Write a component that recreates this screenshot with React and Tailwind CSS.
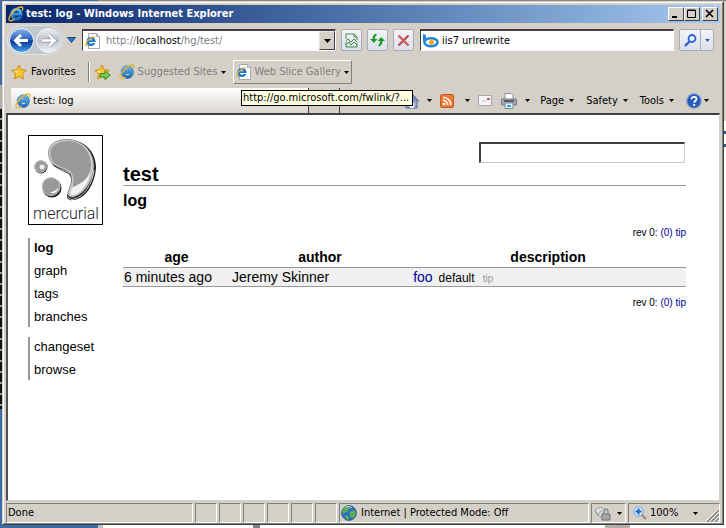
import React from "react";

const UI = "font-['DejaVu_Sans_Condensed','DejaVu_Sans',sans-serif]";

function IeIcon({ size = 16 }) {
  return (
    <svg width={size} height={size} viewBox="0 0 16 16" className="shrink-0" aria-hidden="true">
      <defs>
        <linearGradient id="ieBlue" x1="0" y1="0" x2="0" y2="1">
          <stop offset="0" stopColor="#6cc6f5" />
          <stop offset="1" stopColor="#1565b8" />
        </linearGradient>
      </defs>
      <path
        d="M8.400 1.800a6.200 6.200 0 0 0-6.200 6.300 6.200 6.200 0 0 0 6.200 6.300c2.700 0 4.800-1.500 5.700-3.900h-3.700c-.5.700-1.100 1-2 1-1.300 0-2.300-.8-2.400-2.100h8.400C14.800 4.900 12.100 1.800 8.400 1.800zM6 6.700c.2-1.100 1.100-1.800 2.300-1.800s2.100.7 2.300 1.800z"
        fill="url(#ieBlue)"
        stroke="#1b62a8"
        strokeWidth=".6"
      />
      <path
        d="M14.300 4.300c.9-2 .6-3.300-1-3.300-2 0-5.500 2-8.300 5C2 9.300.3 12.900 1.300 14.400c.8 1 2.700.4 4.700-1"
        fill="none"
        stroke="#e9b52c"
        strokeWidth="1.300"
        strokeLinecap="round"
      />
    </svg>
  );
}

function PageIcon() {
  return (
    <svg width="16" height="16" viewBox="0 0 16 16" className="shrink-0" aria-hidden="true">
      <path d="M3.500.5h8l3 3v12h-11z" fill="#fff" stroke="#a3a9b5" />
      <path d="M11.500.5v3h3" fill="none" stroke="#a3a9b5" />
      <path d="M6 4a4.500 4.500 0 1 0 4.200 6H7.600C6.500 11 4.200 10.900 4.100 9.100h6.500C10.700 6.200 8.800 4 6 4zM4.200 7.300c.3-1.500 3-1.500 3.300 0z" fill="#1d78c8" />
      <path d="M10 4.300C8 3 3 6 1 10.500c-.7 2 0 2.900 1.800 2" fill="none" stroke="#e6b02a" strokeWidth="1.200" />
    </svg>
  );
}

function Caret({ color = "#000" }) {
  return (
    <svg width="5" height="3" viewBox="0 0 5 3" className="shrink-0" aria-hidden="true">
      <path d="M0 0h5L2.500 3z" fill={color} />
    </svg>
  );
}

function Star({ arrow = false }) {
  return (
    <svg width="17" height="17" viewBox="0 0 17 17" className="shrink-0" aria-hidden="true">
      <path d="M8 1l2.100 4.700 5.200.6-3.900 3.500 1.100 5.200L8 12.400 3.500 15l1.100-5.200L.7 6.300l5.200-.6z" fill="#fdc52f" stroke="#d18a14" strokeLinejoin="round" />
      <path d="M8 3.200L6.600 6.500l-3.500.5 2.700 2.200z" fill="#ffeaa0" />
      {arrow && <path d="M6 9.500h5V7l5.300 4.200L11 15.500V13H6z" fill="#79cf4a" stroke="#35851f" />}
    </svg>
  );
}

function BackForward() {
  return (
    <div className="flex h-[30px] w-[56px] shrink-0 items-center rounded-full bg-[#c3c7ce] px-[1px] shadow-[inset_0_0_1px_1px_#e6e6e6]">
      <button aria-label="Back" className="block">
        <svg width="27" height="27" viewBox="0 0 27 27">
          <defs>
            <linearGradient id="back" x1="0" y1="0" x2="0" y2="1">
              <stop offset="0" stopColor="#8eb6ec" />
              <stop offset=".45" stopColor="#2b62bd" />
              <stop offset=".55" stopColor="#0c3c9b" />
              <stop offset="1" stopColor="#44a3f0" />
            </linearGradient>
          </defs>
          <circle cx="13.500" cy="13.500" r="12" fill="url(#back)" stroke="#f2f5fa" />
          <path d="M20 13.500H8M13 8l-5.500 5.500L13 19" fill="none" stroke="#fff" strokeWidth="3" />
        </svg>
      </button>
      <button aria-label="Forward" className="block">
        <svg width="27" height="27" viewBox="0 0 27 27">
          <defs>
            <linearGradient id="fwd" x1="0" y1="0" x2="0" y2="1">
              <stop offset="0" stopColor="#eef0f2" />
              <stop offset=".5" stopColor="#b9c0c8" />
              <stop offset="1" stopColor="#f4f6f8" />
            </linearGradient>
          </defs>
          <circle cx="13.500" cy="13.500" r="12" fill="url(#fwd)" stroke="#edf0f3" />
          <path d="M7 13.500h12M14 8l5.500 5.500L14 19" fill="none" stroke="#8e98a3" strokeWidth="4" />
          <path d="M7 13.500h12M14 8l5.500 5.500L14 19" fill="none" stroke="#fff" strokeWidth="2.500" />
        </svg>
      </button>
    </div>
  );
}

function ToolButton({ label, children }) {
  return (
    <button aria-label={label} className="flex h-[22px] w-[21px] shrink-0 items-center justify-center rounded-[2px] border border-[#a9acb8] bg-gradient-to-b from-[#f4f4f6] to-[#dcdfea]">
      {children}
    </button>
  );
}

function TitleButton({ label, children }) {
  return (
    <button aria-label={label} className="flex h-[14px] w-4 items-center justify-center border border-t-white border-r-[#404040] border-b-[#404040] border-l-white bg-[#d4d0c8]">
      <svg width="10" height="10" viewBox="0 0 10 10" stroke="#000" fill="none">{children}</svg>
    </button>
  );
}

function TitleBar() {
  return (
    <header className="flex h-[18px] shrink-0 items-center gap-[2px] bg-gradient-to-r from-[#0a246a] to-[#a6caf0] pr-[2px] pl-[2px]">
      <IeIcon />
      <h1 className="grow text-[11px] leading-[18px] font-bold text-white">test: log - Windows Internet Explorer</h1>
      <div className="flex">
        <TitleButton label="Minimize"><path d="M1 8h5" strokeWidth="2" /></TitleButton>
        <TitleButton label="Maximize"><path d="M.5 1.500h8v7h-8zM.5 1h8" /></TitleButton>
      </div>
      <TitleButton label="Close"><path d="M1 1l7 7M8 1L1 8" strokeWidth="1.600" /></TitleButton>
    </header>
  );
}

function NavBar() {
  return (
    <div className="flex h-[34px] shrink-0 items-center pr-[6px] pl-[1px]">
      <BackForward />
      <button aria-label="Recent pages" className="ml-[4px] flex w-[9px] justify-center">
        <svg width="9" height="6" viewBox="0 0 9 6"><path d="M.5.500h8L4.500 5.500z" fill="#2f77c4" stroke="#174a86" /></svg>
      </button>
      <div className="ml-[6px] flex h-[22px] min-w-0 flex-1 items-center border border-t-2 border-t-[#404040] border-r-white border-b-white border-l-[#404040] bg-white pl-[2px]">
        <PageIcon />
        <p className="ml-[5px] grow text-[11px] leading-[18px] text-[#808080]">
          http://<span className="text-black">localhost</span>/hg/test/
        </p>
        <button aria-label="Show address list" className="flex h-[19px] w-4 items-center justify-center border border-t-[#e8e6e0] border-r-[#404040] border-b-[#404040] border-l-[#e8e6e0] bg-[#d4d0c8]">
          <svg width="7" height="4" viewBox="0 0 7 4"><path d="M0 0h7L3.500 4z" /></svg>
        </button>
      </div>
      <div className="ml-[5px] flex gap-[5px]">
        <ToolButton label="Compatibility view">
          <svg width="13" height="15" viewBox="0 0 13 15" fill="none" stroke="#3d9147">
            <path d="M1 6V1h8l3 3v3M9 1v3h3M1 9v5h11v-4" />
            <path d="M1 8l2-2 3 3 3-3 3 3M1 12l3-3 2 3 3-3 3 3" />
          </svg>
        </ToolButton>
        <ToolButton label="Refresh">
          <svg width="15" height="14" viewBox="0 0 15 14" fill="#219a2c">
            <path d="M0 6h2.500c0-3 1.500-5 4-5.500v2C5.400 3 5 4 5 6h2.500L3.800 10zM7.500 8L11.200 4 15 8h-2.500c0 3-1.500 5-4 5.500v-2c1.100-.5 1.500-1.500 1.500-3.500z" />
          </svg>
        </ToolButton>
        <ToolButton label="Stop">
          <svg width="13" height="13" viewBox="0 0 13 13"><path d="M1.500 1.500l10 10M11.500 1.500l-10 10" stroke="#c2474f" strokeWidth="2.200" /><path d="M2 2l9 9" stroke="#e38b8b" strokeWidth=".7" /></svg>
        </ToolButton>
      </div>
      <div className="ml-[6px] flex h-[22px] min-w-0 flex-1 items-center border border-t-2 border-t-[#404040] border-r-white border-b-white border-l-[#404040] bg-white pl-[2px]">
        <svg width="16" height="14" viewBox="0 0 16 14" className="shrink-0" aria-hidden="true">
          <path d="M0 0l3 1v6H0z" fill="#1d87d8" />
          <ellipse cx="8" cy="8.300" rx="6.600" ry="4" fill="#fff" stroke="#1d87d8" strokeWidth="2.600" />
          <circle cx="8.500" cy="8.300" r="2.500" fill="#f5a11c" />
        </svg>
        <input aria-label="Search" defaultValue="iis7 urlrewrite" className="ml-[3px] w-full min-w-0 bg-transparent text-[11px] leading-[18px] text-black outline-none" />
      </div>
      <div className="ml-[5px] flex h-[22px] w-[35px] shrink-0 rounded-[2px] border border-[#a9acb8] bg-gradient-to-b from-[#f4f4f6] to-[#dcdfea]">
        <button aria-label="Search" className="flex w-[21px] items-center justify-center border-r border-[#a9acb8]">
          <svg width="13" height="13" viewBox="0 0 13 13" fill="none" stroke="#2a63cf"><circle cx="8" cy="4.500" r="3.500" strokeWidth="1.800" fill="#e8f1ff" /><path d="M5.500 7.500L1 12" strokeWidth="2.400" /></svg>
        </button>
        <button aria-label="Search options" className="flex flex-1 items-center justify-center"><Caret color="#2a63cf" /></button>
      </div>
    </div>
  );
}

function FavoritesBar() {
  return (
    <div className="flex h-[30px] shrink-0 items-center pl-[5px] text-[11px] leading-[16px]">
      <button className="flex items-center gap-[3px]"><Star />Favorites</button>
      <div className="ml-[12px] h-5 w-[2px] border-r border-l border-r-white border-l-[#808080]" />
      <button aria-label="Add to Favorites Bar" className="ml-[4px]"><Star arrow /></button>
      <button className="ml-[8px] flex items-center gap-[3px] text-[#808080]"><IeIcon />Suggested Sites<Caret /></button>
      <button className="ml-[7px] flex h-6 items-center gap-[3px] border border-t-white border-r-[#808080] border-b-[#808080] border-l-white px-[2px] text-[#808080]">
        <PageIcon />Web Slice Gallery<Caret />
      </button>
    </div>
  );
}

function HomeIcon() {
  return (
    <svg width="16" height="16" viewBox="0 0 16 16" aria-hidden="true">
      <path d="M2 8v7h11V8" fill="#9fb2d3" stroke="#4c658f" /><path d="M0 8.500L8 1l7 7.500" fill="#7893be" stroke="#3f5988" /><path d="M6 15v-5h4v5" fill="#eef3fb" />
    </svg>
  );
}

function Command({ label, icon, text, gap = "gap-[5px]" }) {
  return (
    <button aria-label={label} className={"flex items-center " + gap}>{icon}{text}<Caret /></button>
  );
}

function TabRow() {
  return (
    <div className="flex h-[26px] shrink-0 items-end pl-[5px] text-[11px] leading-[16px]">
      <button className="flex h-[25px] w-[298px] shrink-0 items-center gap-[2px] border-r border-r-[#404040] bg-gradient-to-b from-white to-[#d9d6cf] pl-[4px]">
        <IeIcon />test: log
      </button>
      <button aria-label="New tab" className="h-[25px] w-[31px] shrink-0 border-r border-r-[#404040]" />
      <div className="relative flex h-[25px] grow items-center pr-[11px] pl-[64px]">
        <Command label="Home" icon={<HomeIcon />} gap="gap-[7px]" />
        <div className="ml-[8px]">
          <Command label="Feeds" gap="gap-[11px]" icon={
            <svg width="14" height="14" viewBox="0 0 14 14"><rect x=".5" y=".5" width="13" height="13" rx="1.500" fill="#ee7c32" stroke="#c9571b" /><circle cx="4" cy="10" r="1.300" fill="#fff" /><path d="M3 6.300a4.700 4.700 0 0 1 4.700 4.700M3 3.200A7.800 7.800 0 0 1 10.800 11" fill="none" stroke="#fff" strokeWidth="1.500" /></svg>
          } />
        </div>
        <button aria-label="Read mail" className="ml-[8px]">
          <svg width="14" height="11" viewBox="0 0 14 11"><path d="M.5.5h13v10H.5z" fill="#f7f5f5" stroke="#a9a7ac" /><path d="M9 3h3v2H9z" fill="#cf5963" /><path d="M4 6h4" stroke="#d8b9bb" /></svg>
        </button>
        <div className="ml-[9px]">
          <Command label="Print" gap="gap-[8px]" icon={
            <svg width="16" height="16" viewBox="0 0 16 16"><path d="M4 6V.5h6l2 2V6" fill="#fff" stroke="#868c97" /><path d="M.5 6h15v6H.5z" fill="#a4a9b1" stroke="#7a7f89" /><path d="M3 7h10v2H3z" fill="#565b64" /><path d="M4 10h8v5.500H4z" fill="#eef6fb" stroke="#77879b" /><path d="M6 13h4" stroke="#33a1dc" strokeWidth="2" /></svg>
          } />
        </div>
        <div className="ml-auto flex items-center gap-[12px]">
          <Command label="Page" text="Page" />
          <Command label="Safety" text="Safety" />
          <Command label="Tools" text="Tools" />
          <Command label="Help" gap="gap-[2px]" icon={
            <svg width="16" height="16" viewBox="0 0 16 16"><circle cx="8" cy="8" r="7.300" fill="#285bb8" stroke="#8ca7cf" strokeWidth="1.200" /><path d="M5.500 6.200C5.500 3 10.500 3.200 10.500 6c0 1.700-2.300 1.800-2.300 3.700M8.200 11v2" fill="none" stroke="#fff" strokeWidth="1.800" /></svg>
          } />
        </div>
        <div role="tooltip" className="absolute top-[2px] left-[-99px] h-4 w-[172px] overflow-hidden border border-black bg-[#ffffe1] px-[1px] text-[11px] leading-[14px] whitespace-nowrap">
          http://go.microsoft.com/fwlink/?...
        </div>
      </div>
    </div>
  );
}

function MercurialLogo() {
  return (
    <svg width="75" height="90" viewBox="0 0 75 90" role="img" aria-label="mercurial">
      <rect x=".5" y=".5" width="74" height="89" fill="#fff" stroke="#000" />
      <path d="M22 22C22 9 31 5 42 5c17 1 26 14 26 27-1 17-10 31-22 33-7 1-8-3-6-7 3-7 5-14 1-19-6-4-18-4-19-17z" fill="#111" />
      <path d="M20.500 18C20.500 8 30 4 41 4.500c15 1 25 13 25 27C65 47 56 59 46 62c-5 1-7-2-6-5 3-7 5-12 2-19-6-6-21-4-21.500-20z" fill="#c9c9c9" stroke="#777" strokeWidth=".7" />
      <path d="M22.500 18C22.500 9 32 6 41 6c14 1 22 12 22 24-1 10-5 15-10 18-4 2-8 4-9 9 1-9 3-14-1-20-6-6-20-4-20.500-19z" fill="#999" />
      <path d="M45 52c6-2 13-6 17-14-2 12-10 20-16 22-4 1-4-4-1-8z" fill="#f3f3f3" />
      <path d="M22 26c3 9 13 8 20 12M66 35c-1 13-10 27-20 29-3 1-5 0-6-2" fill="none" stroke="#fff" strokeWidth=".8" />
      <circle cx="24" cy="53" r="9.500" fill="#222" /><circle cx="23" cy="51.500" r="9" fill="#999" stroke="#ccc" />
      <path d="M22 57c3 0 8-2 9-6-1 6-5 9-9 6z" fill="#fff" />
      <circle cx="13" cy="32" r="6.500" fill="#222" /><circle cx="12.500" cy="31.500" r="5.800" fill="#999" stroke="#ccc" /><circle cx="14" cy="32" r="2.500" fill="#eee" />
      <text x="5" y="84" fontSize="16" fontFamily="Roboto, sans-serif" fontWeight="300" fill="#222">mercurial</text>
    </svg>
  );
}

function Menu({ items, current }) {
  return (
    <ul className="mt-[10px] border-l-2 border-[#999] pl-[4px] first:mt-0">
      {items.map((item) => (
        <li key={item} className="mb-[3px] text-[13px] leading-[20px] last:mb-0">
          {item === current ? <strong>{item}</strong> : <a href="#" className="text-black">{item}</a>}
        </li>
      ))}
    </ul>
  );
}

function RevNav() {
  return (
    <p className="text-right text-[10px] leading-[12px]">
      rev 0: <a href="#" className="text-[#000099]">(0)</a> <a href="#" className="text-[#000099]">tip</a>
    </p>
  );
}

function Page() {
  return (
    <div className="flex min-h-0 grow gap-[20px] overflow-hidden border border-t-2 border-l-2 border-t-[#404040] border-r-[#d4d0c8] border-b-[#d4d0c8] border-l-[#505050] bg-white pt-[20px] pr-[33px] pl-[20px] font-['Liberation_Sans',Arial,sans-serif] text-black">
      <aside className="w-[75px] shrink-0">
        <a href="#" className="block"><MercurialLogo /></a>
        <nav className="mt-[13px]">
          <Menu items={["log", "graph", "tags", "branches"]} current="log" />
          <Menu items={["changeset", "browse"]} />
        </nav>
      </aside>
      <main className="min-w-0 grow">
        <form className="flex justify-end pt-[7px] pr-[1px]" onSubmit={(e) => e.preventDefault()}>
          <input aria-label="Search log" className="h-[21px] w-[206px] border border-t-2 border-l-2 border-t-[#404040] border-r-[#c8c8c8] border-b-[#c8c8c8] border-l-[#404040] bg-white outline-none" />
        </form>
        <h2 className="border-b border-[#999] text-[20px] leading-[22px] font-bold">test</h2>
        <h3 className="mt-[5px] text-[16px] leading-[20px] font-bold">log</h3>
        <div className="mt-[16px]"><RevNav /></div>
        <table className="mt-[9px] w-full table-fixed border-collapse text-[14px]">
          <colgroup><col className="w-[19%]" /><col className="w-[32%]" /><col /></colgroup>
          <thead>
            <tr className="leading-[19px]"><th className="p-0">age</th><th className="p-0">author</th><th className="p-0">description</th></tr>
          </thead>
          <tbody>
            <tr className="border-y border-[#999] bg-[#f0f0f0] leading-[18px]">
              <td className="px-[1px] py-0">6 minutes ago</td>
              <td className="px-[2px] py-0">Jeremy Skinner</td>
              <td className="px-[3px] py-0">
                <a href="#" className="text-[#000099]">foo</a>
                <span className="ml-[6px] text-[12px] leading-none">default</span>
                <span className="ml-[8px] text-[10px] leading-none text-[#999]">tip</span>
              </td>
            </tr>
          </tbody>
        </table>
        <div className="mt-[10px]"><RevNav /></div>
      </main>
    </div>
  );
}

const CELL = "flex items-center border border-t-[#808080] border-r-white border-b-white border-l-[#808080]";

function StatusBar() {
  return (
    <footer className="mt-[2px] flex h-[20px] shrink-0 gap-[2px] text-[11px] leading-[16px]">
      <div className={CELL + " grow pl-[1px]"}>Done</div>
      {[0, 1, 2, 3, 4, 5].map((n) => <div key={n} className={CELL + " w-[22px]"} />)}
      <div className={CELL + " w-[250px] gap-[4px] pl-[1px]"}>
        <svg width="16" height="16" viewBox="0 0 16 16" className="shrink-0" aria-hidden="true"><circle cx="8" cy="8" r="7.300" fill="#2a71c4" stroke="#295089" /><path d="M3 3c2-2 5-2 6 0L7 6l-2 1-3 2C1 7 1 5 3 3zM9 7l4-2 2 3-2 5-4-1zM5 10l3 2-1 3-3-2z" fill="#5eb14f" /><path d="M4 3c2-2 5-2 7 0" stroke="#d6efff" fill="none" /></svg>
        Internet | Protected Mode: Off
      </div>
      <button aria-label="Privacy report" className={CELL + " w-[35px] gap-[6px] pl-[2px]"}>
        <svg width="17" height="15" viewBox="0 0 17 15"><path d="M1 4l5-3 5 2-3 8-4-1z" fill="#d9dbe0" stroke="#a5a7ac" /><path d="M1 5l3 4 4-5" stroke="#88a090" fill="none" /><path d="M8 8h8v6H8z" fill="#a5a7a9" stroke="#75777c" /><path d="M10 8V5.500c0-3 4-3 4 0V8" fill="none" stroke="#85888e" strokeWidth="1.300" /></svg>
        <Caret />
      </button>
      <div className={CELL + " w-[92px] pl-[4px]"}>
        <button aria-label="Zoom level" className="flex items-center gap-[3px]">
          <svg width="14" height="14" viewBox="0 0 14 14"><path d="M8 8l5 5" stroke="#a88660" strokeWidth="2.200" /><circle cx="5.500" cy="5.500" r="4.700" fill="#d5eaff" stroke="#75a6dc" /><path d="M5.500 2.500v6M2.500 5.500h6" stroke="#1768c4" strokeWidth="2" /></svg>
          100%
          <span className="ml-[12px]"><Caret /></span>
        </button>
        <svg width="13" height="13" viewBox="0 0 13 13" className="mt-auto ml-auto" aria-hidden="true"><path d="M1 13L13 1M5 13l8-8M9 13l4-4" stroke="#808080" strokeWidth="1.500" /><path d="M0 12L12 0M4 12l8-8M8 12l4-4" stroke="#fff" /></svg>
      </div>
    </footer>
  );
}

export default function App() {
  return (
    <div className={"flex h-screen flex-col overflow-hidden bg-[#d4d0c8] text-black " + UI}>
      <div className="flex h-[1px] shrink-0"><div className="w-[98px] bg-[#4468a8]" /><div className="grow bg-[#8c8680]" /></div>
      <div className="flex min-h-0 grow">
        <div className="flex w-[2px] shrink-0 flex-col">
          <div className="h-[84px] bg-[#3a6ea5]" />
          <div className="h-[24px] bg-[#b0aca8]" />
          <div className="h-[300px] bg-[repeating-linear-gradient(#111_0_9px,#999_9px_11px)]" />
          <div className="grow bg-[#3a6ea5]" />
        </div>
        <div className="flex min-w-0 grow flex-col border border-t-[#d4d0c8] border-r-[#404040] border-b-[#404040] border-l-[#d4d0c8] bg-[#d4d0c8]">
          <div className="flex min-h-0 grow flex-col border border-t-white border-r-[#808080] border-b-[#808080] border-l-white px-[2px] pt-[2px]">
            <TitleBar />
            <NavBar />
            <FavoritesBar />
            <TabRow />
            <Page />
            <StatusBar />
          </div>
        </div>
        <div className="flex w-[2px] shrink-0 flex-col">
          <div className="h-[120px] bg-[#d4d0c8]" />
          <div className="h-[36px] bg-[repeating-linear-gradient(#fff_0_10px,#29518c_10px_13px)]" />
          <div className="grow bg-white" />
        </div>
      </div>
      <div className="flex h-[3px] shrink-0">
        <div className="w-[98px] bg-[#3a6ea5]" /><div className="w-[5px] bg-[#c0c0c0]" /><div className="w-[150px] bg-white" />
        <div className="w-[7px] bg-[#808080]" /><div className="w-[345px] bg-white" /><div className="w-[25px] bg-[#b4b0a8]" /><div className="grow bg-white" />
      </div>
    </div>
  );
}
